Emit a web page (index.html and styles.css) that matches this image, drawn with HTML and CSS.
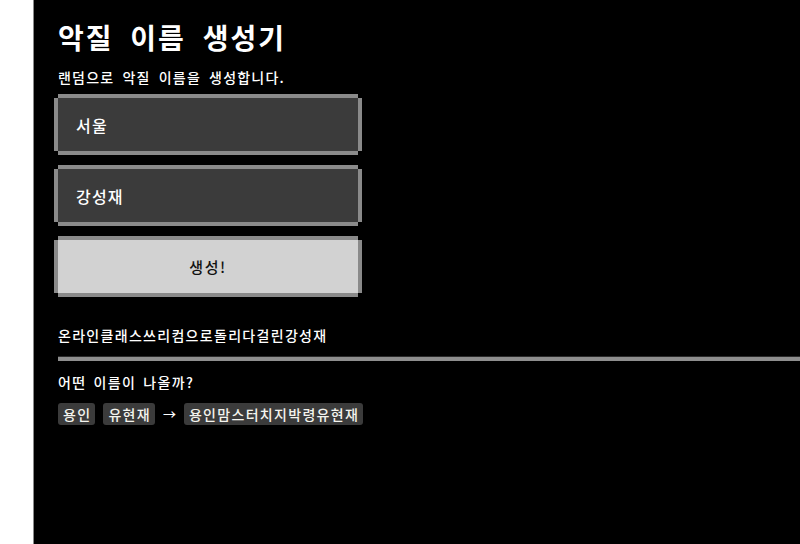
FILE: index.html
```html
<!DOCTYPE html>
<html lang="ko">
<head>
<meta charset="utf-8">
<title>악질 이름 생성기</title>
<link rel="stylesheet" href="styles.css">
</head>
<body>
<main class="app">
  <h1 class="title">악질 이름 생성기</h1>
  <p class="subtitle">랜덤으로 악질 이름을 생성합니다.</p>
  <form class="form">
    <input class="field" type="text" value="서울">
    <input class="field" type="text" value="강성재">
    <button class="btn" type="button">생성!</button>
  </form>
  <p class="result">온라인클래스쓰리컴으로돌리다걸린강성재</p>
  <hr class="divider">
  <p class="question">어떤 이름이 나올까?</p>
  <div class="example">
    <span class="tag">용인</span>
    <span class="tag">유현재</span>
    <span class="arrow">→</span>
    <span class="tag">용인맘스터치지박령유현재</span>
  </div>
</main>
</body>
</html>
```
FILE: styles.css
```css
html, body {
  margin: 0;
  padding: 0;
  height: 100%;
  overflow: hidden;
  background: #ffffff;
}

body {
  display: flex;
  font-family: "Noto Sans CJK KR", "Noto Sans", sans-serif;
  color: #ffffff;
}

.app {
  flex: 1;
  margin-left: 33px;
  border-left: 1px solid #8a8a8a;
  background: #000000;
  padding: 19px 0 0 24px;
  min-height: 544px;
  font-size: 14px;
  font-weight: 500;
  letter-spacing: 1.3px;
  word-spacing: 3px;
}

.title {
  margin: 0;
  font-size: 28px;
  line-height: 36px;
  font-weight: 700;
  letter-spacing: 2px;
  word-spacing: 7px;
}

.subtitle {
  margin: 12px 0 0;
  font-size: 14px;
  line-height: 20px;
  letter-spacing: 1.2px;
}

.form {
  display: flex;
  flex-direction: column;
  gap: 18px;
  margin-top: 11px;
  width: 300px;
}

.field,
.btn {
  box-sizing: border-box;
  width: 300px;
  height: 53px;
  margin: 0;
  border: none;
  outline: none;
  font-family: "Noto Sans CJK KR", "Noto Sans", sans-serif;
  font-size: 16px;
  font-weight: 500;
  letter-spacing: 1.2px;
  box-shadow: 0 -4px 0 0 #8a8a8a, 0 4px 0 0 #8a8a8a, -4px 0 0 0 #8a8a8a, 4px 0 0 0 #8a8a8a;
}

.field {
  background: #3b3b3b;
  color: #ffffff;
  padding: 0 18px;
}

.btn {
  background: #d2d2d2;
  color: #111111;
  text-align: center;
  font-size: 15px;
  letter-spacing: 1.5px;
}

.result {
  margin: 32px 0 0;
  line-height: 20px;
}

.divider {
  margin: 11px 0 0;
  height: 4px;
  border: none;
  border-top: 1px solid #2a2a2a;
  background: #8e8e8e;
}

.question {
  margin: 11px 0 0;
  line-height: 20px;
  word-spacing: 2px;
}

.example {
  display: flex;
  align-items: center;
  gap: 8px;
  margin-top: 11px;
}

.tag {
  background: #3b3b3b;
  border-radius: 3px;
  padding: 0 4px 0 5px;
  line-height: 22px;
  color: #f4f4ee;
}

.arrow {
  line-height: 22px;
  font-size: 13px;
  letter-spacing: 0;
}
```
